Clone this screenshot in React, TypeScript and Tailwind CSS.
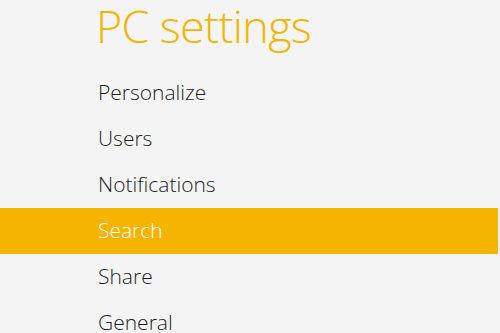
import React from 'react';

const items = ['Personalize', 'Users', 'Notifications', 'Search', 'Share', 'General'];

export default function App() {
  const active = 'Search';
  return (
    <div
      className="h-[333px] w-[500px] overflow-hidden bg-[#f4f4f4]"
      style={{ fontFamily: '"Open Sans", "Noto Sans", sans-serif' }}
    >
      <h1 className="pl-[96px] pt-[3px] text-[45px] font-light leading-none tracking-[-0.7px] text-[#f4b400]">
        PC settings
      </h1>
      <ul className="mt-[22px] pr-[2px]">
        {items.map((item) => (
          <li
            key={item}
            className={
              item === active
                ? 'flex h-[46px] items-center bg-[#f4b400] pl-[98px] text-[21px] font-light text-white'
                : 'flex h-[46px] items-center pl-[98px] text-[21px] font-light text-[#1e1e1e]'
            }
          >
            {item}
          </li>
        ))}
      </ul>
    </div>
  );
}
